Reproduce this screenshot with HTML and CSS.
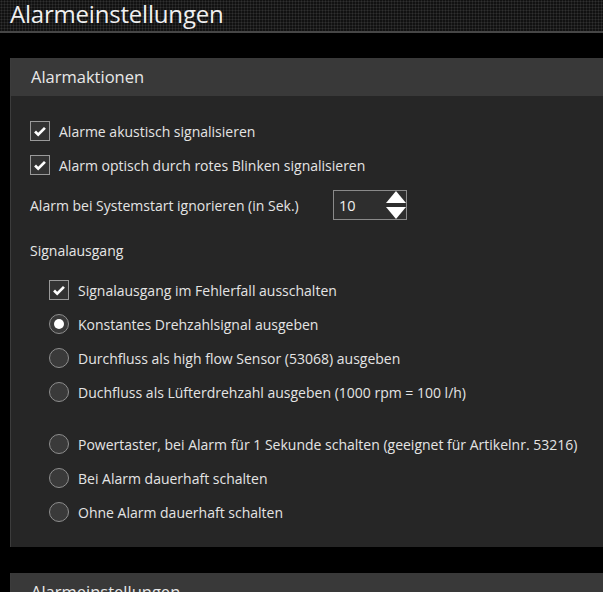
FILE: index.html
```html
<!DOCTYPE html>
<html>
<head>
<meta charset="utf-8">
<link rel="stylesheet" href="styles.css">
</head>
<body>
<header class="topbar"><h1 class="title">Alarmeinstellungen</h1></header>
<main class="content">
  <section class="panel">
    <div class="panel-head">Alarmaktionen</div>
    <div class="panel-body">
      <div class="row"><span class="cb checked"><svg viewBox="0 0 20 20"><path d="M4.5 10.5l3.5 3.5L15.5 6.5" /></svg></span><span>Alarme akustisch signalisieren</span></div>
      <div class="row"><span class="cb checked"><svg viewBox="0 0 20 20"><path d="M4.5 10.5l3.5 3.5L15.5 6.5" /></svg></span><span>Alarm optisch durch rotes Blinken signalisieren</span></div>
      <div class="row spin-row">
        <span class="spin-label">Alarm bei Systemstart ignorieren (in Sek.)</span>
        <div class="spin"><span class="spin-val">10</span>
          <svg class="spin-arrows" viewBox="0 0 20 28"><polygon points="10,0 20,12 0,12" /><polygon points="0,16 20,16 10,28" /></svg>
        </div>
      </div>
      <div class="section-label">Signalausgang</div>
      <div class="group">
        <div class="row"><span class="cb checked"><svg viewBox="0 0 20 20"><path d="M4.5 10.5l3.5 3.5L15.5 6.5" /></svg></span><span>Signalausgang im Fehlerfall ausschalten</span></div>
        <div class="row"><span class="radio selected"></span><span>Konstantes Drehzahlsignal ausgeben</span></div>
        <div class="row"><span class="radio"></span><span>Durchfluss als high flow Sensor (53068) ausgeben</span></div>
        <div class="row"><span class="radio"></span><span>Duchfluss als Lüfterdrehzahl ausgeben (1000 rpm = 100 l/h)</span></div>
        <div class="row gap-top"><span class="radio"></span><span>Powertaster, bei Alarm für 1 Sekunde schalten (geeignet für Artikelnr. 53216)</span></div>
        <div class="row"><span class="radio"></span><span>Bei Alarm dauerhaft schalten</span></div>
        <div class="row"><span class="radio"></span><span>Ohne Alarm dauerhaft schalten</span></div>
      </div>
    </div>
  </section>
  <section class="panel">
    <div class="panel-head">Alarmeinstellungen</div>
  </section>
</main>
</body>
</html>
```
FILE: styles.css
```css
html, body {
  margin: 0;
  padding: 0;
  background: #000;
  color: #e6e6e6;
  font-family: "Open Sans", "Noto Sans", sans-serif;
  overflow: hidden;
}
.topbar {
  height: 31px;
  background-color: #111;
  background-image: radial-gradient(circle, #303030 0.9px, transparent 1.1px);
  background-size: 3px 3px;
  border-bottom: 2px solid #464646;
}
.title {
  margin: 0;
  padding-left: 10px;
  font-size: 24px;
  font-weight: 400;
  line-height: 28px;
  color: #f0f0f0;
  letter-spacing: -0.2px;
}
.content {
  padding: 25px 0 0 10px;
}
.panel {
  margin-bottom: 26px;
  border-left: 1px solid #3c3c3c;
}
.panel-head {
  height: 38px;
  background: #393939;
  padding-left: 20px;
  font-size: 16.5px;
  line-height: 38px;
  color: #e8e8e8;
}
.panel-body {
  background: #262626;
  padding: 18px 0 18px 19px;
}
.row {
  display: flex;
  align-items: center;
  height: 34px;
  font-size: 14px;
  color: #e4e4e4;
}
.cb, .radio {
  width: 20px;
  height: 20px;
  box-sizing: border-box;
  flex: none;
  margin-right: 9px;
  display: inline-flex;
  align-items: center;
  justify-content: center;
}
.cb {
  border: 1px solid #9a9a9a;
  background: #333;
}
.cb svg {
  width: 18px;
  height: 18px;
  fill: none;
  stroke: #fff;
  stroke-width: 3;
}
.radio {
  border: 1.5px solid #8e8e8e;
  border-radius: 50%;
  background: #3a3a3a;
}
.radio.selected::after {
  content: "";
  width: 10px;
  height: 10px;
  border-radius: 50%;
  background: #fff;
}
.spin-row {
  height: 46px;
}
.spin-label {
  width: 303px;
}
.spin {
  width: 74px;
  height: 30px;
  box-sizing: border-box;
  border: 1px solid #8a8a8a;
  background: #2e2e2e;
  display: flex;
  align-items: center;
  justify-content: space-between;
  padding: 0 0 0 5px;
}
.spin-val {
  font-size: 14.5px;
  color: #f0f0f0;
}
.spin-arrows {
  width: 20px;
  height: 28px;
  fill: #fff;
}
.section-label {
  font-size: 14px;
  margin-top: 11px;
  height: 24px;
  line-height: 24px;
}
.group {
  padding-left: 19px;
  margin-top: 10px;
}
.gap-top {
  margin-top: 18px;
}
```
